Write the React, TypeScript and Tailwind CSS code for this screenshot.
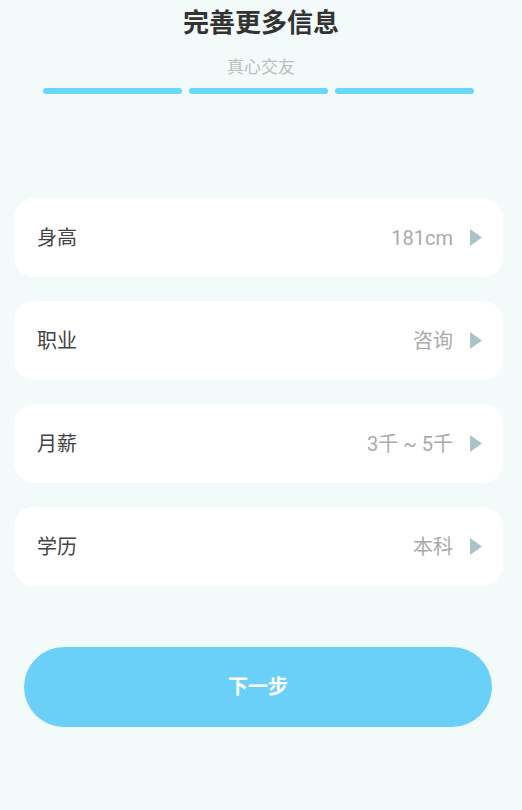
export default function App() {
  const rows = [
    { label: "身高", value: "181cm" },
    { label: "职业", value: "咨询" },
    { label: "月薪", value: "3千 ~ 5千" },
    { label: "学历", value: "本科" },
  ];

  return (
    <div
      className="min-h-[810px] w-[522px] bg-[#f2fbfa] flex flex-col"
      style={{ fontFamily: 'Roboto, "Noto Sans CJK SC", sans-serif' }}
    >
      {/* Header */}
      <div className="pt-[6px] flex flex-col items-center">
        <h1 className="h-[34px] text-[26px] leading-[34px] font-bold text-[#333333]">完善更多信息</h1>
        <p className="mt-[16px] h-[22px] text-[17px] leading-[22px] text-[#bdbdbd]">真心交友</p>
        <div className="mt-[10px] ml-[43px] mr-[48px] self-stretch flex gap-[7px]">
          <div className="flex-1 h-[6px] rounded-full bg-[#66d8fc]" />
          <div className="flex-1 h-[6px] rounded-full bg-[#66d8fc]" />
          <div className="flex-1 h-[6px] rounded-full bg-[#66d8fc]" />
        </div>
      </div>

      {/* Rows */}
      <div className="mt-[104px] ml-[14px] mr-[19px] flex flex-col gap-[24px]">
        {rows.map((r) => (
          <div
            key={r.label}
            className="h-[79px] bg-white rounded-[20px] flex items-center pl-[23px] pr-[21px]"
          >
            <span className="text-[20px] text-[#444444]">{r.label}</span>
            <span className="ml-auto text-[20px] text-[#aaaaaa]">{r.value}</span>
            <svg width="12" height="17" viewBox="0 0 12 17" className="ml-[17px]">
              <path d="M0 0 L12 8.5 L0 17 Z" fill="#a8c4c8" />
            </svg>
          </div>
        ))}
      </div>

      {/* Button */}
      <div className="mt-[61px] pl-[24px] pr-[30px]">
        <button className="w-full h-[80px] rounded-full bg-[#6bd0f8] text-white text-[20px] font-bold">
          下一步
        </button>
      </div>
    </div>
  );
}
